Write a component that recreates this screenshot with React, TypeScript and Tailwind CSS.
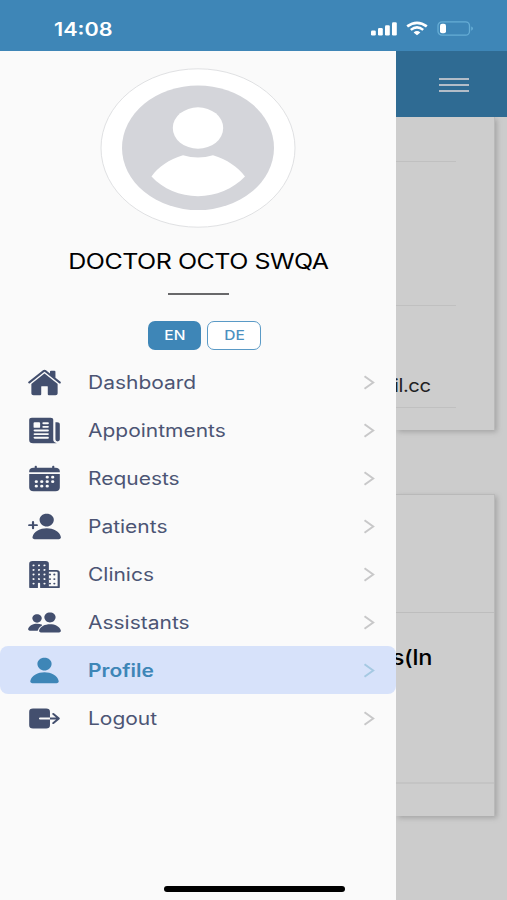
import type { ReactNode } from "react";
import clsx from "clsx";
import type { IconType } from "react-icons";
import {
  IoBusiness,
  IoCalendar,
  IoExit,
  IoHome,
  IoNewspaper,
  IoPeople,
  IoPerson,
  IoPersonAdd,
} from "react-icons/io5";

type MenuItem = {
  label: string;
  icon: IconType;
  active?: boolean;
};

const menu: MenuItem[] = [
  { label: "Dashboard", icon: IoHome },
  { label: "Appointments", icon: IoNewspaper },
  { label: "Requests", icon: IoCalendar },
  { label: "Patients", icon: IoPersonAdd },
  { label: "Clinics", icon: IoBusiness },
  { label: "Assistants", icon: IoPeople },
  { label: "Profile", icon: IoPerson, active: true },
  { label: "Logout", icon: IoExit },
];

function StatusBar() {
  return (
    <div className="flex h-[51px] shrink-0 items-center bg-[#3e86b7] pt-1.5 pl-[54px] text-white">
      <span className="w-[316px] pt-0.5 text-[18px] font-semibold leading-none">
        <span className="inline-block origin-left scale-x-[1.2]">14:08</span>
      </span>
      <svg width="28" height="16" viewBox="0 0 28 16" fill="#fff">
        <rect x="1" y="9.5" width="4.8" height="5" rx="1.3" />
        <rect x="8" y="7" width="4.8" height="7.5" rx="1.3" />
        <rect x="15" y="4.2" width="4.8" height="10.3" rx="1.3" />
        <rect x="22" y="1.2" width="4.8" height="13.3" rx="1.3" />
      </svg>
      <svg className="ml-2" width="22" height="16" viewBox="0 0 22 16" fill="none">
        <path d="M1.2 5.4Q11 -1.8 20.8 5.4" stroke="#fff" strokeWidth="2.7" />
        <path d="M4.8 8.9Q11 3.8 17.2 8.9" stroke="#fff" strokeWidth="2.5" />
        <path d="M11 14.2L7.6 11.4Q11 8.8 14.4 11.4Z" fill="#fff" />
      </svg>
      <svg className="ml-[9px]" width="37" height="16" viewBox="0 0 37 16" fill="none">
        <rect x="1" y="0.8" width="31.5" height="13.4" rx="4" stroke="#66add5" strokeWidth="1.3" />
        <path d="M34.2 5.4v4.4q1.8-.6 1.8-2.2t-1.8-2.2z" fill="#66add5" />
        <rect x="3" y="2.7" width="6" height="9.6" rx="2" fill="#fff" />
      </svg>
    </div>
  );
}

function Avatar() {
  return (
    <svg width="196" height="160" viewBox="0 0 196 160">
      <ellipse cx="98" cy="80" rx="97" ry="79.2" fill="#fff" stroke="#e0e1e3" />
      <ellipse cx="98" cy="79.8" rx="76" ry="62.3" fill="#d4d5da" />
      <ellipse cx="98" cy="60" rx="25.2" ry="20.7" fill="#fff" />
      <path
        d="M51.5 108.6C58 98.8 69 91.5 83 87.2Q98 91.8 113 87.2C127 91.5 138 98.8 145 108.6C133 121 116 128.2 98 128.2S63 121 51.5 108.6Z"
        fill="#fff"
      />
    </svg>
  );
}

function MenuRow({ label, icon: Icon, active }: MenuItem) {
  return (
    <li
      className={clsx(
        "flex h-12 items-center rounded-[8px] pl-[27px] pr-[21px]",
        active ? "bg-[#d7e2fa] text-[#3e86b7]" : "text-[#434f6e]"
      )}
    >
      <Icon className="h-[29px] w-[35px]" preserveAspectRatio="none" />
      <span
        className={clsx(
          "ml-[26px] flex-1 pt-px text-[18px] leading-none",
          active ? "font-semibold" : "text-[#4c5574]"
        )}
      >
        <span className="inline-block origin-left scale-x-[1.165]">{label}</span>
      </span>
      <svg className="mt-px" width="12" height="15" viewBox="0 0 12 15" fill="none">
        <path
          d="M1.5 1.2L10.2 7.5L1.5 13.8"
          stroke={active ? "#a5c9e2" : "#c8c8c9"}
          strokeWidth="2"
        />
      </svg>
    </li>
  );
}

function Drawer() {
  return (
    <aside className="flex w-[395.5px] shrink-0 flex-col items-center bg-[#fafafa]">
      <div className="mt-[17px] h-[160px]">
        <Avatar />
      </div>
      <h1 className="mt-[23px] ml-px text-[21px] leading-[22px] tracking-[-0.4px] whitespace-nowrap text-black">
        <span className="inline-block scale-x-[1.19]">DOCTOR OCTO SWQA</span>
      </h1>
      <div className="mt-[20px] ml-px h-[2px] w-[61px] bg-[#68686a]" />
      <div className="mt-[26px] ml-[14px] flex gap-1.5 text-[13px] font-medium">
        <button className="h-[29px] w-[53px] rounded-[7px] bg-[#3e86b7] text-white">
          <span className="inline-block scale-x-[1.19]">EN</span>
        </button>
        <button className="h-[29px] w-[54px] rounded-[7px] border-[1.5px] border-[#5a9ac6] bg-white text-[#4b90bf]">
          <span className="inline-block scale-x-[1.19]">DE</span>
        </button>
      </div>
      <ul className="mt-2 w-full">
        {menu.map((item) => (
          <MenuRow key={item.label} {...item} />
        ))}
      </ul>
      <div className="mt-auto mb-[8px] ml-[113px] h-[6px] w-[181px] rounded-full bg-black" />
    </aside>
  );
}

function Card({ className, children }: { className: string; children: ReactNode }) {
  return (
    <section
      className={clsx(
        "w-[99.5px] shrink-0 border-r border-[#b9b9b9] bg-[#cdcdcd] shadow-[2px_2px_5px_#a5a5a5]",
        className
      )}
    >
      {children}
    </section>
  );
}

// dimmed page that stays visible beside the drawer
function PageBehind() {
  return (
    <main className="flex flex-1 flex-col overflow-hidden bg-[#cccccc]">
      <header className="z-10 flex h-[66px] shrink-0 flex-col items-center justify-center gap-1 bg-[#2f6b93] pt-px pl-[5px]">
        <div className="h-[2px] w-[30px] bg-[#b3bdc8]" />
        <div className="h-[2px] w-[30px] bg-[#b3bdc8]" />
        <div className="h-[2px] w-[30px] bg-[#b3bdc8]" />
      </header>
      <Card className="h-[313px]">
        <div className="h-[45px] w-[60px] border-b border-[#c0c0c0]" />
        <div className="h-[144px] w-[60px] border-b border-[#c0c0c0]" />
        <div className="flex h-[102px] w-[60px] items-end justify-end border-b border-[#c0c0c0] pr-[25.5px] pb-[11px] text-[18px] leading-[20px] tracking-[-0.4px] text-[#222]">
          <span className="inline-block origin-right scale-x-[1.12]">il.cc</span>
        </div>
      </Card>
      <Card className="mt-[64px] h-[322px] border-t">
        <div className="h-[118px] border-b border-[#bdbdbd]" />
        <div className="flex h-[171px] justify-end border-b-2 border-[#c4c4c4] pt-[33px] pr-[62px] text-[21px] leading-[24px] font-medium tracking-[-0.4px] text-black">
          <span className="inline-block origin-right scale-x-[1.12]">s(In</span>
        </div>
      </Card>
    </main>
  );
}

export default function App() {
  return (
    <div className="flex h-[900px] w-[507px] flex-col overflow-hidden font-['Inter','Liberation_Sans',sans-serif]">
      <StatusBar />
      <div className="flex flex-1">
        <Drawer />
        <PageBehind />
      </div>
    </div>
  );
}
